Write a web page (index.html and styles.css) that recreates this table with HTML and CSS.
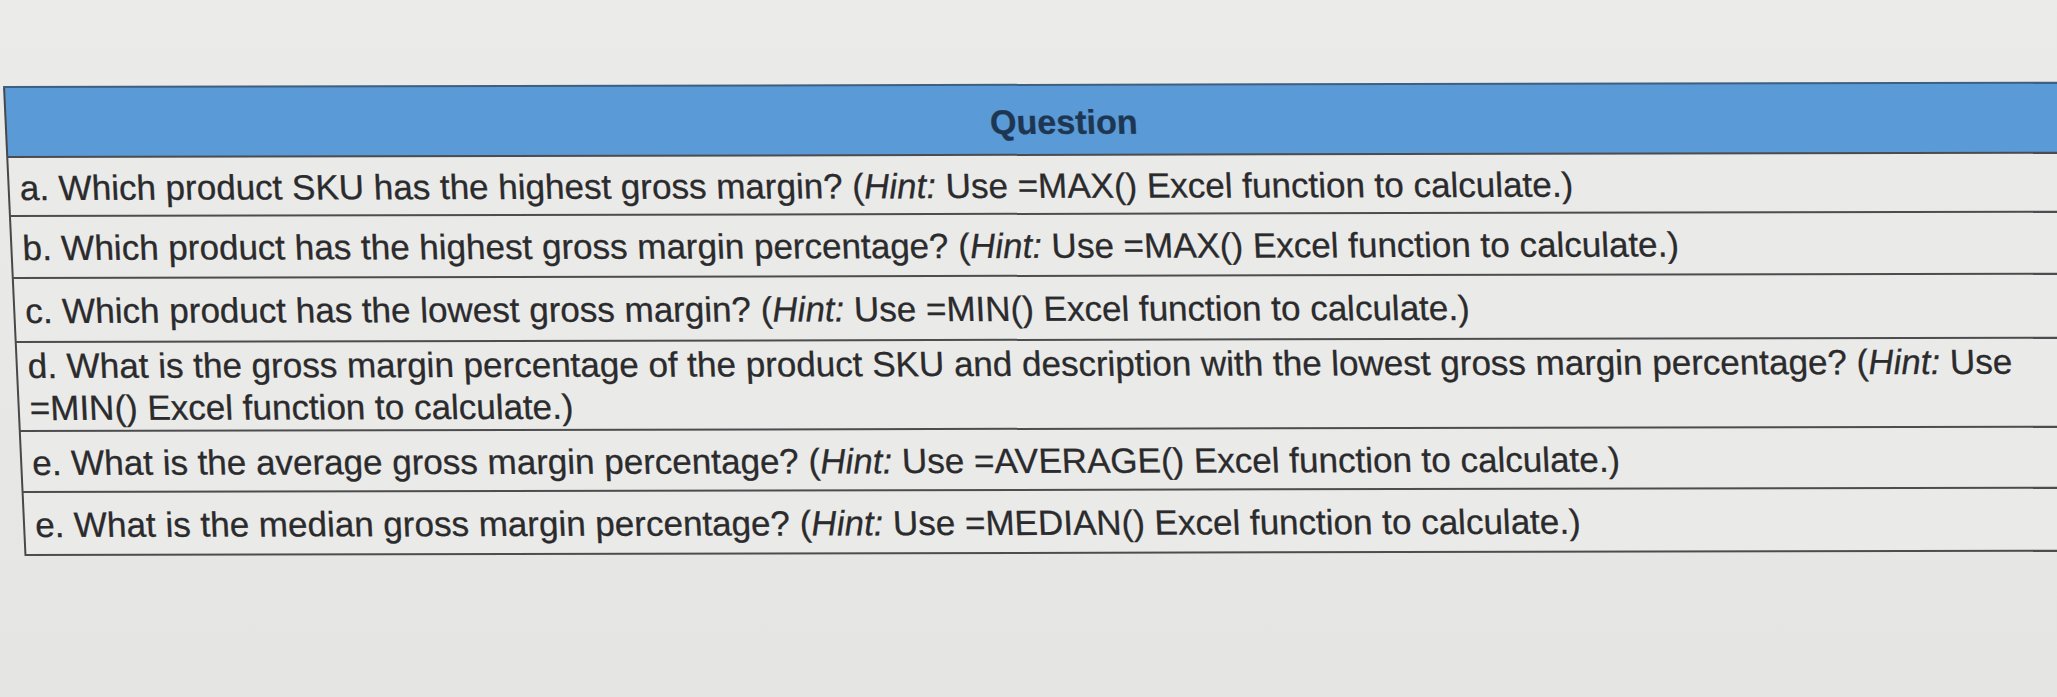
FILE: index.html
```html
<!DOCTYPE html>
<html>
<head>
<meta charset="utf-8">
<link rel="stylesheet" href="styles.css">
</head>
<body>
<div class="page">
  <table class="qtable">
    <thead>
      <tr><th class="head">Question</th></tr>
    </thead>
    <tbody>
      <tr><td class="row r-a">a. Which product SKU has the highest gross margin? (<i>Hint:</i> Use =MAX() Excel function to calculate.)</td></tr>
      <tr><td class="row r-b">b. Which product has the highest gross margin percentage? (<i>Hint:</i> Use =MAX() Excel function to calculate.)</td></tr>
      <tr><td class="row r-c">c. Which product has the lowest gross margin? (<i>Hint:</i> Use =MIN() Excel function to calculate.)</td></tr>
      <tr><td class="row r-d">d. What is the gross margin percentage of the product SKU and description with the lowest gross margin percentage? (<i>Hint:</i> Use<br>=MIN() Excel function to calculate.)</td></tr>
      <tr><td class="row r-e">e. What is the average gross margin percentage? (<i>Hint:</i> Use =AVERAGE() Excel function to calculate.)</td></tr>
      <tr><td class="row r-f">e. What is the median gross margin percentage? (<i>Hint:</i> Use =MEDIAN() Excel function to calculate.)</td></tr>
    </tbody>
  </table>
</div>
</body>
</html>
```
FILE: styles.css
```css
html, body {
  margin: 0;
  padding: 0;
}
body {
  background: #e7e7e5;
  font-family: "Liberation Sans", Arial, sans-serif;
  color: #2b2b2d;
  overflow: hidden;
}
.page {
  padding: 86px 0 0 3px;
  height: 611px;
  background: linear-gradient(180deg, #ebebea 0%, #e5e5e3 100%);
}
.qtable {
  width: 2080px;
  border-collapse: collapse;
  border-left: 2px solid #48484a;
  transform: rotate(-0.12deg) skewX(2.5deg);
  transform-origin: 0 0;
}
.head {
  background: #5a9ad6;
  color: #1d3652;
  font-weight: bold;
  font-size: 34px;
  height: 64px;
  padding: 4px 0 0 36px;
  text-align: center;
  border-top: 2px solid #3d5f80;
  border-bottom: 2px solid #4a4c50;
  -webkit-text-stroke: 0.3px #1d3652;
}
.row {
  background: #eaeae8;
  font-size: 35px;
  line-height: 40px;
  padding: 2px 0 0 10px;
  text-align: left;
  border-bottom: 2px solid #4d4d4f;
  white-space: nowrap;
  vertical-align: middle;
  -webkit-text-stroke: 0.3px #2b2b2d;
}
.row i {
  font-style: italic;
}
.r-a { height: 55px; padding-top: 2px; }
.r-b { height: 58px; }
.r-c { height: 60px; }
.r-d { height: 87px; line-height: 42px; padding-top: 0; }
.r-e { height: 57px; }
.r-f { height: 59px; }
```
